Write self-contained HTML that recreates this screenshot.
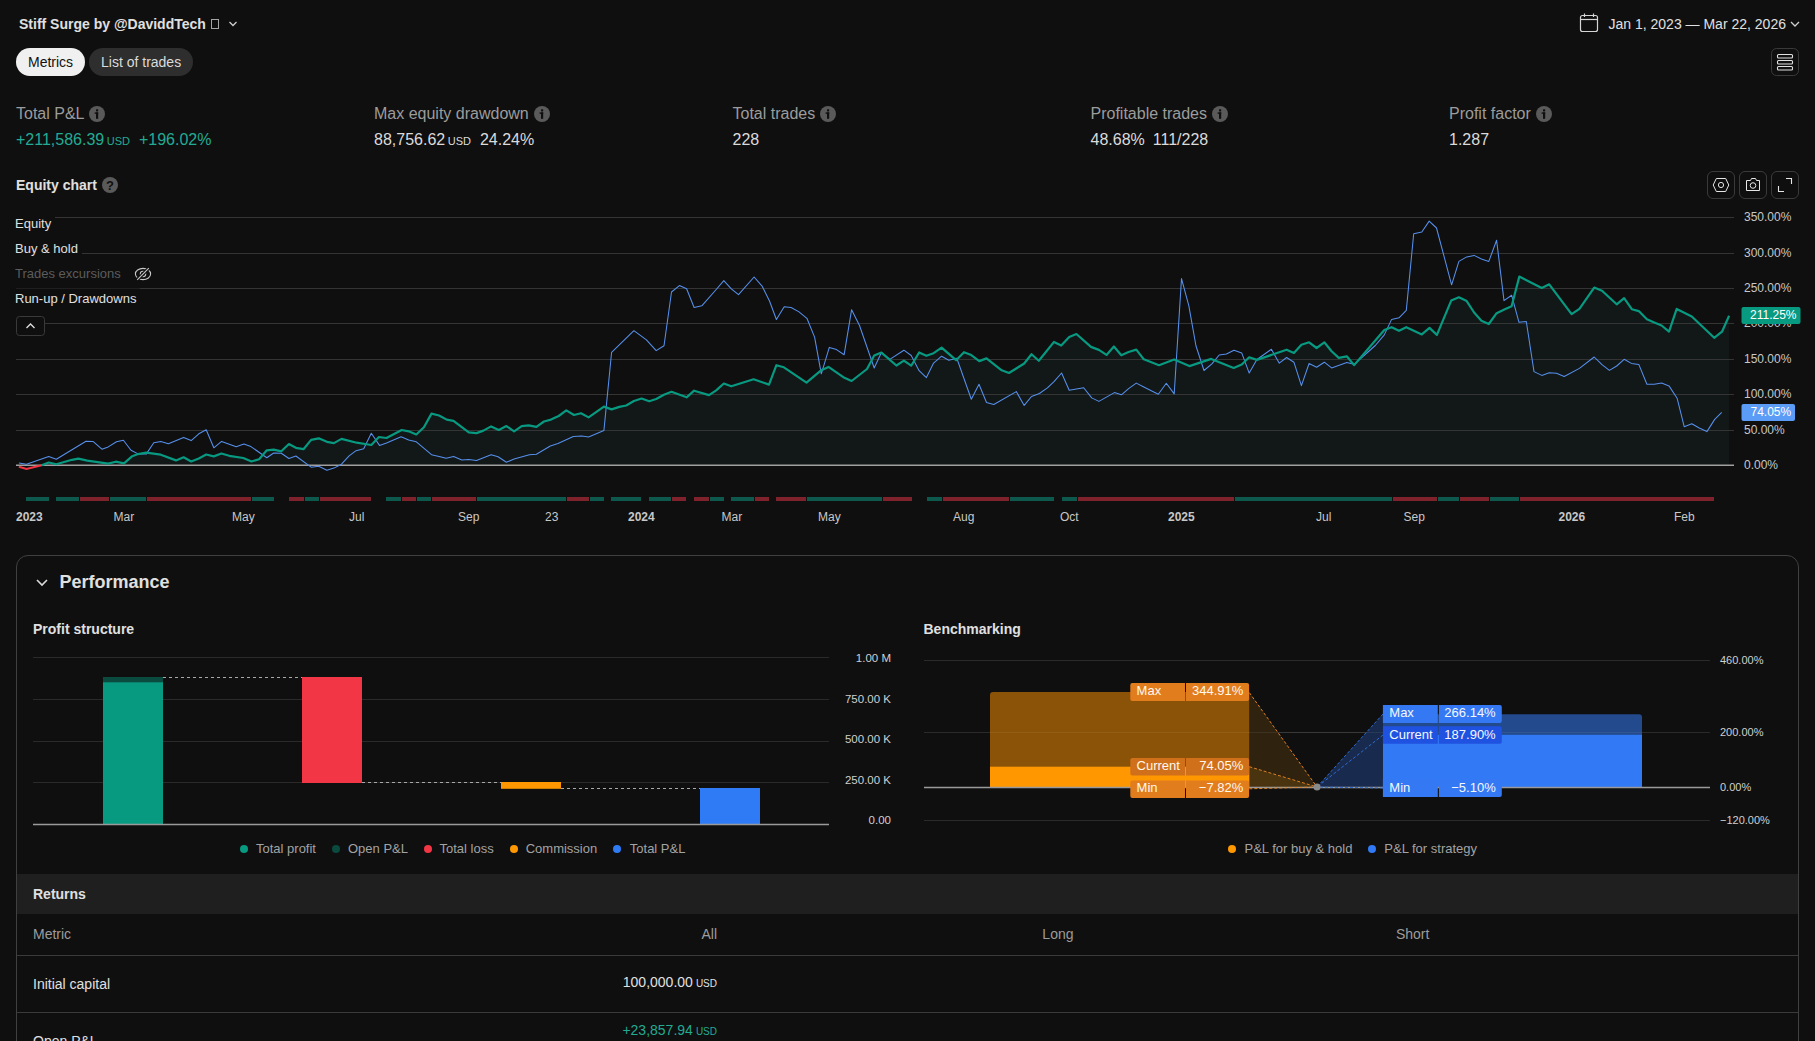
<!DOCTYPE html>
<html><head><meta charset="utf-8">
<style>
html,body{margin:0;padding:0;background:#0f0f0f;width:1815px;height:1041px;overflow:hidden;}
body{font-family:"Liberation Sans",sans-serif;color:#dbdbdb;position:relative;}
.t{position:absolute;line-height:1;white-space:nowrap;}
.b{font-weight:700;}
.lbl{font-size:16px;color:#9c9c9c;}
.val{font-size:16px;color:#dbdbdb;}
.usd{font-size:11px;margin-left:2.5px;}
.info{position:absolute;width:16px;height:16px;border-radius:50%;background:#5a5a5a;}
.ibtn{position:absolute;top:171px;width:26px;height:26px;border:1px solid #3a3a3a;border-radius:6px;}
.leg{font-size:13px;color:#a3a3a3;}
.dot{position:absolute;width:8px;height:8px;border-radius:50%;}
svg{position:absolute;left:0;top:0;}
</style></head><body>

<!-- header -->
<div class="t b" style="left:19px;top:17.2px;font-size:14px;color:#e0e0e0;">Stiff Surge by @DaviddTech</div>
<div style="position:absolute;left:211px;top:19px;width:6px;height:8px;border:1px solid #a6a6a6;"></div>
<svg width="1815" height="100" style="pointer-events:none">
  <path d="M229.5,22 L233,25.5 L236.5,22" fill="none" stroke="#cfcfcf" stroke-width="1.3"/>
  <!-- calendar -->
  <rect x="1580.5" y="15.5" width="17" height="16" rx="2" fill="none" stroke="#d6d6d6" stroke-width="1.2"/>
  <line x1="1580.5" y1="19.5" x2="1597.5" y2="19.5" stroke="#d6d6d6" stroke-width="1.2"/>
  <line x1="1584.5" y1="13.5" x2="1584.5" y2="17" stroke="#d6d6d6" stroke-width="1.2"/>
  <line x1="1593.5" y1="13.5" x2="1593.5" y2="17" stroke="#d6d6d6" stroke-width="1.2"/>
  <path d="M1791,22 L1795,26 L1799,22" fill="none" stroke="#cfcfcf" stroke-width="1.3"/>
  <!-- menu btn -->
  <rect x="1771.5" y="48.5" width="27" height="27" rx="5" fill="none" stroke="#3a3a3a"/>
  <rect x="1777.5" y="54.5" width="15" height="3.5" rx="1" fill="none" stroke="#e0e0e0" stroke-width="1.1"/>
  <rect x="1777.5" y="60.5" width="15" height="3.5" rx="1" fill="none" stroke="#e0e0e0" stroke-width="1.1"/>
  <rect x="1777.5" y="66.5" width="15" height="3.5" rx="1" fill="none" stroke="#e0e0e0" stroke-width="1.1"/>
</svg>
<div class="t" style="left:1608.5px;top:17.3px;font-size:14px;color:#e0e0e0;">Jan 1, 2023 — Mar 22, 2026</div>

<!-- pills -->
<div style="position:absolute;left:16px;top:48px;width:69px;height:28px;border-radius:14px;background:#f0f0f0;"></div>
<div class="t" style="left:28px;top:54.6px;font-size:14px;color:#111;">Metrics</div>
<div style="position:absolute;left:89px;top:48px;width:104px;height:28px;border-radius:14px;background:#2e2e2e;"></div>
<div class="t" style="left:101px;top:54.6px;font-size:14px;color:#dbdbdb;">List of trades</div>

<!-- metrics -->
<div class="t lbl" style="left:16px;top:105.5px;">Total P&amp;L</div><div class="info" style="left:89px;top:106px;"><svg width="16" height="16" style="position:absolute;left:0;top:0"><rect x="7" y="3.2" width="2.2" height="2.2" rx="0.6" fill="#0f0f0f"/><rect x="5.6" y="6.4" width="3.6" height="1.4" fill="#0f0f0f"/><rect x="7" y="6.4" width="2.2" height="6.4" fill="#0f0f0f"/></svg></div>
<div class="t val" style="left:16px;top:131.5px;color:#22ab94;">+211,586.39<span class="usd">USD</span><span style="margin-left:9px">+196.02%</span></div>

<div class="t lbl" style="left:374px;top:105.5px;">Max equity drawdown</div><div class="info" style="left:534px;top:106px;"><svg width="16" height="16" style="position:absolute;left:0;top:0"><rect x="7" y="3.2" width="2.2" height="2.2" rx="0.6" fill="#0f0f0f"/><rect x="5.6" y="6.4" width="3.6" height="1.4" fill="#0f0f0f"/><rect x="7" y="6.4" width="2.2" height="6.4" fill="#0f0f0f"/></svg></div>
<div class="t val" style="left:374px;top:131.5px;">88,756.62<span class="usd">USD</span><span style="margin-left:9px">24.24%</span></div>

<div class="t lbl" style="left:732.5px;top:105.5px;">Total trades</div><div class="info" style="left:820px;top:106px;"><svg width="16" height="16" style="position:absolute;left:0;top:0"><rect x="7" y="3.2" width="2.2" height="2.2" rx="0.6" fill="#0f0f0f"/><rect x="5.6" y="6.4" width="3.6" height="1.4" fill="#0f0f0f"/><rect x="7" y="6.4" width="2.2" height="6.4" fill="#0f0f0f"/></svg></div>
<div class="t val" style="left:732.5px;top:131.5px;">228</div>

<div class="t lbl" style="left:1090.5px;top:105.5px;">Profitable trades</div><div class="info" style="left:1212px;top:106px;"><svg width="16" height="16" style="position:absolute;left:0;top:0"><rect x="7" y="3.2" width="2.2" height="2.2" rx="0.6" fill="#0f0f0f"/><rect x="5.6" y="6.4" width="3.6" height="1.4" fill="#0f0f0f"/><rect x="7" y="6.4" width="2.2" height="6.4" fill="#0f0f0f"/></svg></div>
<div class="t val" style="left:1090.5px;top:131.5px;">48.68%<span style="margin-left:8px">111/228</span></div>

<div class="t lbl" style="left:1449px;top:105.5px;">Profit factor</div><div class="info" style="left:1536px;top:106px;"><svg width="16" height="16" style="position:absolute;left:0;top:0"><rect x="7" y="3.2" width="2.2" height="2.2" rx="0.6" fill="#0f0f0f"/><rect x="5.6" y="6.4" width="3.6" height="1.4" fill="#0f0f0f"/><rect x="7" y="6.4" width="2.2" height="6.4" fill="#0f0f0f"/></svg></div>
<div class="t val" style="left:1449px;top:131.5px;">1.287</div>

<!-- equity chart heading -->
<div class="t b" style="left:16px;top:178.2px;font-size:14px;color:#e0e0e0;">Equity chart</div>
<div style="position:absolute;left:102px;top:177px;width:16px;height:16px;border-radius:50%;background:#5a5a5a;color:#0f0f0f;font-size:13px;font-weight:700;line-height:17px;text-align:center;">?</div>

<div class="ibtn" style="left:1707px;"></div>
<div class="ibtn" style="left:1739px;"></div>
<div class="ibtn" style="left:1771px;"></div>

<!-- main chart svg -->
<svg width="1815" height="1041">
  <path d="M41.7,465 L41.7,465.3 L48.7,462.5 L56.3,464.3 L72,459.8 L78.4,458.7 L87.3,460.6 L108.2,463.6 L115.8,461.7 L124,463.4 L131.7,456.6 L138,454.1 L146.2,452.6 L160.8,454.7 L176,460.4 L183.6,457.3 L191.2,461.5 L198.8,458.5 L206.2,454.5 L213.8,456.4 L221.4,453.5 L229.2,455.8 L243.3,458 L251.5,461.5 L259.1,459.2 L266.8,450.3 L273.7,449.7 L281.3,451.3 L288.9,444 L295.9,447.8 L303.5,449.2 L311.1,439.9 L318.7,438.3 L326.9,441.8 L333.9,443.1 L341.5,438.9 L356.7,442.7 L371.3,445 L378.9,437 L386.5,438 L401.7,430 L408.7,431.3 L416.3,434.5 L423.9,427.2 L431.5,413.6 L439.1,415.5 L446.7,419.6 L453.5,420.8 L468.8,432.4 L476.5,433.1 L483.4,430.6 L491.1,426.4 L498.8,429.9 L506.4,426.1 L514.1,431.3 L521.7,426.1 L528.7,425.4 L536.4,426.8 L544,421.5 L551,419.6 L558.7,416 L566.3,410.4 L574,415 L581,413.2 L588.6,417.4 L603.9,406.6 L611.6,409.4 L619.3,406.9 L626.2,405.5 L633.9,401 L641.6,398.5 L649.2,401.3 L656.2,399 L663.9,394.8 L671.5,391.8 L686.6,397.3 L694.1,390.7 L709,395.1 L716.2,390.4 L723.8,383.5 L731.3,386.3 L753.6,379.3 L769,384.6 L776.4,365.2 L783.9,367.3 L806.5,382.7 L821.3,370.2 L828.5,366.9 L844.4,377.8 L851.6,381 L867,369 L874.2,355.5 L881.4,352.6 L896.4,365.5 L903.9,360.6 L911.2,365.7 L919.1,352.5 L926.4,355.8 L933.6,353.2 L941.6,347.6 L956.1,360.2 L964,352.2 L971.3,355.1 L979.3,361.1 L986.5,358.4 L1001.7,370.3 L1009,373 L1024.2,363.5 L1031.5,354.2 L1038.8,360.8 L1054,341.9 L1061.2,345.6 L1069.2,337 L1076.4,334 L1091,346.9 L1098.9,349.9 L1106.5,354.9 L1113.9,346.5 L1121.3,355.3 L1128.6,352 L1136.3,349.6 L1143.8,359.3 L1159,365.2 L1174.2,359.5 L1189.4,366.1 L1211.2,358.9 L1233.7,367.9 L1241.7,364.5 L1249.2,357.3 L1256.9,359.9 L1286.6,349.7 L1293.9,352.9 L1301.4,344.7 L1309.1,342.3 L1316.6,348 L1324.3,342.3 L1331.6,351.3 L1338.8,357.9 L1346.8,356.3 L1354.1,365.1 L1384.3,330 L1391.6,327.2 L1399,330.8 L1406.3,327.2 L1421.8,334.4 L1429.5,327.9 L1436.9,334.9 L1451.2,300.6 L1458.9,297.3 L1466.7,301.1 L1474.1,312.5 L1481.4,320.7 L1488.8,324 L1496.6,313.2 L1504.3,309.6 L1511.6,306.3 L1519.3,276.6 L1541.8,288 L1549.2,284.3 L1571.6,314.2 L1579.4,308.8 L1594.2,287.6 L1602,290.7 L1616.7,304.3 L1624.1,298.1 L1631.8,309.2 L1638.8,311.1 L1646.9,319.3 L1654.3,322.6 L1661.6,325.5 L1669,331.6 L1676.7,308.9 L1691.8,316.5 L1714.2,337.8 L1722,331.7 L1729.1,315.7 L1729.1,465 Z" fill="#121717"/>
  <line x1="16" x2="1734" y1="430.5" y2="430.5" stroke="#343434" stroke-width="1"/><line x1="16" x2="1734" y1="394.5" y2="394.5" stroke="#343434" stroke-width="1"/><line x1="16" x2="1734" y1="359.5" y2="359.5" stroke="#343434" stroke-width="1"/><line x1="16" x2="1734" y1="323.5" y2="323.5" stroke="#343434" stroke-width="1"/><line x1="16" x2="1734" y1="288.5" y2="288.5" stroke="#343434" stroke-width="1"/><line x1="16" x2="1734" y1="253.5" y2="253.5" stroke="#343434" stroke-width="1"/><line x1="16" x2="1734" y1="217.5" y2="217.5" stroke="#343434" stroke-width="1"/>
  <line x1="16" x2="1734" y1="465.2" y2="465.2" stroke="#a0a0a0" stroke-width="1.6"/>
  <path d="M18.9,466.8 L26.5,469 L41.7,465.3" fill="none" stroke="#f23645" stroke-width="2"/>
  <path d="M18.9,463 L26.5,464.3 L48.7,456.6 L56.3,459.2 L86,441.2 L93,441.4 L101.9,449.2 L108.2,446.9 L116.5,441.8 L123.4,440.2 L131,450.3 L138,453.9 L146.2,454.1 L153.8,442.7 L160.8,441.4 L168.4,443.7 L183.6,437.4 L191.2,440.6 L198.8,433.8 L206.2,429.8 L213.8,447.8 L221.6,441.4 L236.2,446.7 L243.9,444.1 L250.9,446.6 L266.8,457.7 L273.7,453 L281.3,453.2 L288.9,458.5 L295.9,456 L311.1,467.2 L318.7,466.2 L326.9,470.3 L333.9,468.1 L341.5,464.2 L349.1,455.8 L356.1,450.7 L363.7,448.8 L371.3,433.2 L379.5,445.4 L386.5,443.1 L401.1,436.8 L408.7,439.9 L416.3,441.8 L431.5,454.7 L439.1,456.4 L446.1,458.3 L453.6,456.4 L461.8,460 L468.8,459.6 L476.5,460.5 L491.1,454.7 L498.1,456.8 L506.4,462.3 L514.1,459.1 L529.4,454.7 L536.4,454.3 L550.3,446 L558,443.5 L573.3,436.6 L581.7,435.9 L588.6,436.9 L603.9,430.6 L611.6,352.3 L633.9,330.7 L646.4,339.8 L656.2,350.6 L664,345.8 L671.5,292 L679.4,285.6 L686.6,288.8 L694.1,307.5 L701.8,305.8 L716.2,289.5 L723.8,280.6 L731.3,288.8 L738.5,294.6 L754.1,277 L762.3,286.4 L769.5,301 L776.4,319.5 L784.2,306.8 L791.1,307.5 L799,311.9 L806.9,318.3 L814.6,337.1 L821.3,373.8 L829.3,347.4 L836.5,349.6 L844.1,354.8 L851.6,309.7 L859.5,325.5 L874.2,368 L881.4,352.5 L889.8,359.4 L903.9,350.2 L911.2,355.5 L919.1,370.7 L926.4,377.6 L933.6,363.1 L941.6,356.2 L948.8,360.2 L956.8,358.2 L971.3,399.2 L979,384.2 L986.5,402.5 L993.8,404.5 L1016.3,391.6 L1024.2,405.4 L1031.5,396.5 L1039.4,393.5 L1047.4,387.9 L1054,381.6 L1061.6,373 L1069.2,390.2 L1083.7,387.7 L1091.7,397.9 L1098.9,401.4 L1114.4,392.6 L1121.4,394.8 L1128.6,388.6 L1136.3,383.1 L1143.8,387 L1158.3,394.3 L1166.3,383.3 L1174.2,393.9 L1181.5,278.6 L1188.8,305.7 L1196,346 L1204,370.5 L1211.9,363.9 L1219.2,355 L1226.4,354 L1234,350.3 L1241.7,352.9 L1249.2,373.1 L1256.9,359.5 L1271.4,349.3 L1279.3,363.2 L1286.6,357.5 L1293.9,362.2 L1301.4,385.7 L1309.1,363.5 L1316.6,367.2 L1324.3,362.2 L1331.6,367.9 L1346.8,362.6 L1354.1,364.3 L1368,352 L1375.3,345.5 L1384.3,334.9 L1391.6,319.4 L1399,317.8 L1406.3,310.4 L1413.7,233.7 L1421.8,232 L1429.2,221.1 L1436.5,228 L1451.6,284.8 L1458.9,261.4 L1466.7,256.9 L1474.1,255.4 L1481.4,259 L1488.8,261.4 L1496.6,240.2 L1504,300.6 L1511.6,295.2 L1519,322.3 L1526.3,321.5 L1534,371.6 L1541.8,375.4 L1549.2,372.8 L1556.5,373.3 L1564.2,376.5 L1579.4,368.4 L1594.2,357 L1602,364.7 L1609.4,370.4 L1616.7,366 L1624.1,359.3 L1631.4,363.4 L1638.8,364.4 L1646.9,384.3 L1654.3,384.3 L1661.6,383 L1669,385.9 L1677.1,398.2 L1684.2,426.7 L1691.8,423.8 L1699.2,428 L1706.9,431.6 L1714.7,419.4 L1721.7,412.4" fill="none" stroke="#5690ec" stroke-width="1.05" stroke-linejoin="round"/>
  <path d="M41.7,465.3 L48.7,462.5 L56.3,464.3 L72,459.8 L78.4,458.7 L87.3,460.6 L108.2,463.6 L115.8,461.7 L124,463.4 L131.7,456.6 L138,454.1 L146.2,452.6 L160.8,454.7 L176,460.4 L183.6,457.3 L191.2,461.5 L198.8,458.5 L206.2,454.5 L213.8,456.4 L221.4,453.5 L229.2,455.8 L243.3,458 L251.5,461.5 L259.1,459.2 L266.8,450.3 L273.7,449.7 L281.3,451.3 L288.9,444 L295.9,447.8 L303.5,449.2 L311.1,439.9 L318.7,438.3 L326.9,441.8 L333.9,443.1 L341.5,438.9 L356.7,442.7 L371.3,445 L378.9,437 L386.5,438 L401.7,430 L408.7,431.3 L416.3,434.5 L423.9,427.2 L431.5,413.6 L439.1,415.5 L446.7,419.6 L453.5,420.8 L468.8,432.4 L476.5,433.1 L483.4,430.6 L491.1,426.4 L498.8,429.9 L506.4,426.1 L514.1,431.3 L521.7,426.1 L528.7,425.4 L536.4,426.8 L544,421.5 L551,419.6 L558.7,416 L566.3,410.4 L574,415 L581,413.2 L588.6,417.4 L603.9,406.6 L611.6,409.4 L619.3,406.9 L626.2,405.5 L633.9,401 L641.6,398.5 L649.2,401.3 L656.2,399 L663.9,394.8 L671.5,391.8 L686.6,397.3 L694.1,390.7 L709,395.1 L716.2,390.4 L723.8,383.5 L731.3,386.3 L753.6,379.3 L769,384.6 L776.4,365.2 L783.9,367.3 L806.5,382.7 L821.3,370.2 L828.5,366.9 L844.4,377.8 L851.6,381 L867,369 L874.2,355.5 L881.4,352.6 L896.4,365.5 L903.9,360.6 L911.2,365.7 L919.1,352.5 L926.4,355.8 L933.6,353.2 L941.6,347.6 L956.1,360.2 L964,352.2 L971.3,355.1 L979.3,361.1 L986.5,358.4 L1001.7,370.3 L1009,373 L1024.2,363.5 L1031.5,354.2 L1038.8,360.8 L1054,341.9 L1061.2,345.6 L1069.2,337 L1076.4,334 L1091,346.9 L1098.9,349.9 L1106.5,354.9 L1113.9,346.5 L1121.3,355.3 L1128.6,352 L1136.3,349.6 L1143.8,359.3 L1159,365.2 L1174.2,359.5 L1189.4,366.1 L1211.2,358.9 L1233.7,367.9 L1241.7,364.5 L1249.2,357.3 L1256.9,359.9 L1286.6,349.7 L1293.9,352.9 L1301.4,344.7 L1309.1,342.3 L1316.6,348 L1324.3,342.3 L1331.6,351.3 L1338.8,357.9 L1346.8,356.3 L1354.1,365.1 L1384.3,330 L1391.6,327.2 L1399,330.8 L1406.3,327.2 L1421.8,334.4 L1429.5,327.9 L1436.9,334.9 L1451.2,300.6 L1458.9,297.3 L1466.7,301.1 L1474.1,312.5 L1481.4,320.7 L1488.8,324 L1496.6,313.2 L1504.3,309.6 L1511.6,306.3 L1519.3,276.6 L1541.8,288 L1549.2,284.3 L1571.6,314.2 L1579.4,308.8 L1594.2,287.6 L1602,290.7 L1616.7,304.3 L1624.1,298.1 L1631.8,309.2 L1638.8,311.1 L1646.9,319.3 L1654.3,322.6 L1661.6,325.5 L1669,331.6 L1676.7,308.9 L1691.8,316.5 L1714.2,337.8 L1722,331.7 L1729.1,315.7" fill="none" stroke="#089981" stroke-width="2.2" stroke-linejoin="round"/>
  <rect x="26" y="497" width="23" height="4" fill="#0e594d"/><rect x="56" y="497" width="23" height="4" fill="#0e594d"/><rect x="80" y="497" width="29" height="4" fill="#80222c"/><rect x="110" y="497" width="36" height="4" fill="#0e594d"/><rect x="147" y="497" width="104" height="4" fill="#80222c"/><rect x="252" y="497" width="22" height="4" fill="#0e594d"/><rect x="289" y="497" width="15" height="4" fill="#80222c"/><rect x="305" y="497" width="14" height="4" fill="#0e594d"/><rect x="320" y="497" width="51" height="4" fill="#80222c"/><rect x="386" y="497" width="15" height="4" fill="#0e594d"/><rect x="402" y="497" width="14" height="4" fill="#80222c"/><rect x="417" y="497" width="14" height="4" fill="#0e594d"/><rect x="432" y="497" width="44" height="4" fill="#80222c"/><rect x="477" y="497" width="89" height="4" fill="#0e594d"/><rect x="567" y="497" width="22" height="4" fill="#80222c"/><rect x="590" y="497" width="14" height="4" fill="#0e594d"/><rect x="611" y="497" width="30" height="4" fill="#0e594d"/><rect x="649" y="497" width="22" height="4" fill="#0e594d"/><rect x="672" y="497" width="14" height="4" fill="#80222c"/><rect x="694" y="497" width="15" height="4" fill="#80222c"/><rect x="710" y="497" width="14" height="4" fill="#0e594d"/><rect x="731" y="497" width="23" height="4" fill="#0e594d"/><rect x="755" y="497" width="14" height="4" fill="#80222c"/><rect x="776" y="497" width="30" height="4" fill="#80222c"/><rect x="807" y="497" width="75" height="4" fill="#0e594d"/><rect x="883" y="497" width="29" height="4" fill="#80222c"/><rect x="927" y="497" width="15" height="4" fill="#0e594d"/><rect x="943" y="497" width="66" height="4" fill="#80222c"/><rect x="1010" y="497" width="44" height="4" fill="#0e594d"/><rect x="1062" y="497" width="15" height="4" fill="#0e594d"/><rect x="1078" y="497" width="156" height="4" fill="#80222c"/><rect x="1235" y="497" width="157" height="4" fill="#0e594d"/><rect x="1393" y="497" width="44" height="4" fill="#80222c"/><rect x="1438" y="497" width="21" height="4" fill="#0e594d"/><rect x="1460" y="497" width="29" height="4" fill="#80222c"/><rect x="1490" y="497" width="29" height="4" fill="#0e594d"/><rect x="1520" y="497" width="194" height="4" fill="#80222c"/>
  <g font-family="Liberation Sans" font-size="12" fill="#c8c8c8"><text x="1744" y="469.1">0.00%</text><text x="1744" y="434.3">50.00%</text><text x="1744" y="398.3">100.00%</text><text x="1744" y="363.3">150.00%</text><text x="1744" y="327.3">200.00%</text><text x="1744" y="292.3">250.00%</text><text x="1744" y="257.3">300.00%</text><text x="1744" y="221.3">350.00%</text></g>
  <g font-family="Liberation Sans" font-size="12" fill="#c8c8c8"><text x="16" y="521" font-weight="700">2023</text><text x="113.5" y="521" >Mar</text><text x="232" y="521" >May</text><text x="349" y="521" >Jul</text><text x="458" y="521" >Sep</text><text x="545" y="521" >23</text><text x="628" y="521" font-weight="700">2024</text><text x="721.5" y="521" >Mar</text><text x="818" y="521" >May</text><text x="953" y="521" >Aug</text><text x="1060" y="521" >Oct</text><text x="1168" y="521" font-weight="700">2025</text><text x="1316" y="521" >Jul</text><text x="1403.6" y="521" >Sep</text><text x="1558.5" y="521" font-weight="700">2026</text><text x="1674" y="521" >Feb</text></g>
  <rect x="1741.5" y="307" width="59" height="17" rx="2" fill="#089981"/>
  <text x="1750" y="318.9" font-family="Liberation Sans" font-size="12" fill="#ffffff">211.25%</text>
  <rect x="1741.5" y="404" width="53.5" height="17" rx="2" fill="#5b9cf6"/>
  <text x="1750.5" y="415.9" font-family="Liberation Sans" font-size="12" fill="#ffffff">74.05%</text>
  <!-- icons -->
  <path d="M1716.3,178.5 L1725.7,178.5 L1728.8,185 L1725.7,191.5 L1716.3,191.5 L1713.2,185 Z" fill="none" stroke="#e6e6e6" stroke-width="1"/>
  <circle cx="1721" cy="185" r="2.6" fill="none" stroke="#e6e6e6" stroke-width="1"/>
  <path d="M1746.5,180.5 L1750.5,180.5 L1751.5,178.5 L1755.5,178.5 L1756.5,180.5 L1759.5,180.5 L1759.5,190.5 L1746.5,190.5 Z" fill="none" stroke="#e6e6e6" stroke-width="1"/>
  <circle cx="1753" cy="185.5" r="2.8" fill="none" stroke="#e6e6e6" stroke-width="1"/>
  <path d="M1786,178.5 L1791.5,178.5 L1791.5,184" fill="none" stroke="#e6e6e6" stroke-width="1.1"/>
  <path d="M1778.5,186 L1778.5,191.5 L1784,191.5" fill="none" stroke="#e6e6e6" stroke-width="1.1"/>
</svg>

<!-- chart legend -->
<div style="position:absolute;left:10px;top:215px;width:45px;height:19px;background:#0f0f0f;"></div>
<div style="position:absolute;left:10px;top:240px;width:72px;height:19px;background:#0f0f0f;"></div>
<div style="position:absolute;left:10px;top:265px;width:146px;height:19px;background:#0f0f0f;"></div>
<div style="position:absolute;left:10px;top:287.8px;width:130px;height:22px;background:rgba(15,15,15,0.55);"></div>
<div class="t" style="left:15px;top:217px;font-size:13px;color:#e0e0e0;">Equity</div>
<div class="t" style="left:15px;top:242px;font-size:13px;color:#e0e0e0;">Buy &amp; hold</div>
<div class="t" style="left:15px;top:267px;font-size:13px;color:#5c5c5c;">Trades excursions</div>
<div class="t" style="left:15px;top:292px;font-size:13px;color:#e0e0e0;">Run-up / Drawdowns</div>
<svg width="1815" height="400">
  <ellipse cx="143" cy="274" rx="7.6" ry="5.6" fill="none" stroke="#c8c8c8" stroke-width="1.1"/>
  <circle cx="143" cy="274" r="2.7" fill="none" stroke="#c8c8c8" stroke-width="1.1"/>
  <line x1="137" y1="280" x2="149" y2="268" stroke="#0f0f0f" stroke-width="3.2"/>
  <line x1="137.2" y1="279.8" x2="148.8" y2="268.2" stroke="#c8c8c8" stroke-width="1.1"/>
  <rect x="16.5" y="316.5" width="28" height="19" rx="3" fill="#0f0f0f" stroke="#3a3a3a"/>
  <path d="M26.5,328 L30.5,324 L34.5,328" fill="none" stroke="#e0e0e0" stroke-width="1.3"/>
</svg>

<!-- performance panel -->
<div style="position:absolute;left:16px;top:555px;width:1781px;height:600px;border:1px solid #404040;border-radius:12px;"></div>
<svg width="1815" height="1041">
  <path d="M37,580 L42,585 L47,580" fill="none" stroke="#dbdbdb" stroke-width="1.6"/>
</svg>
<div class="t b" style="left:59.5px;top:572.8px;font-size:18px;color:#e0e0e0;">Performance</div>
<div class="t b" style="left:33px;top:621.9px;font-size:14px;color:#e0e0e0;">Profit structure</div>
<div class="t b" style="left:923.5px;top:622px;font-size:14px;color:#e0e0e0;">Benchmarking</div>

<svg width="1815" height="1041">
  <g stroke="#2a2a2a" stroke-width="1">
    <line x1="33" x2="829" y1="657.5" y2="657.5"/>
    <line x1="33" x2="829" y1="699.5" y2="699.5"/>
    <line x1="33" x2="829" y1="741.5" y2="741.5"/>
    <line x1="33" x2="829" y1="782.5" y2="782.5"/>
    <line x1="924" x2="1710" y1="660.5" y2="660.5"/>
    <line x1="924" x2="1710" y1="732.5" y2="732.5"/>
    <line x1="924" x2="1710" y1="820.5" y2="820.5"/>
  </g>
  <g font-family="Liberation Sans" font-size="11.5" fill="#d0d0d0" text-anchor="end">
    <text x="891" y="662.3">1.00 M</text>
    <text x="891" y="703.2">750.00 K</text>
    <text x="891" y="743.4">500.00 K</text>
    <text x="891" y="784.3">250.00 K</text>
    <text x="891" y="824">0.00</text>
  </g>
  <rect x="103" y="677" width="60" height="5.2" fill="#0a4a3f"/>
  <rect x="103" y="682.2" width="60" height="142.5" fill="#089981"/>
  <rect x="302" y="677" width="60" height="106" fill="#f23645"/>
  <rect x="501" y="782" width="60" height="6.8" fill="#ff9800"/>
  <rect x="700" y="788" width="60" height="36.7" fill="#2f7bf5"/>
  <g stroke="#a8a8a8" stroke-width="1" stroke-dasharray="3,3">
    <line x1="163" x2="302" y1="677.5" y2="677.5"/>
    <line x1="362" x2="501" y1="782.5" y2="782.5"/>
    <line x1="561" x2="700" y1="788.5" y2="788.5"/>
  </g>
  <line x1="33" x2="829" y1="824.5" y2="824.5" stroke="#9a9a9a" stroke-width="1.5"/>

  <!-- benchmarking -->
  <g font-family="Liberation Sans" font-size="11" fill="#d0d0d0">
    <text x="1720" y="663.8">460.00%</text>
    <text x="1720" y="735.8">200.00%</text>
    <text x="1720" y="790.8">0.00%</text>
    <text x="1720" y="823.8">−120.00%</text>
  </g>
  <path d="M1249.3,692.5 L1317,787 L1249.3,788 Z" fill="#2f230f"/>
  <path d="M1249.3,766.7 L1317,787 L1249.3,788 Z" fill="#4a3410"/>
  <path d="M993,692 L1246.3,692 Q1249.3,692 1249.3,695 L1249.3,788 L990,788 L990,695 Q990,692 993,692 Z" fill="#8a5308"/>
  <rect x="990" y="766.7" width="259.3" height="20.7" fill="#ff9800"/>
  <path d="M1383,714 L1317,787 L1383,787 Z" fill="#182a4d"/>
  <path d="M1383,714.2 L1639,714.2 Q1642,714.2 1642,717.2 L1642,787.4 L1383,787.4 Z" fill="#234a8c"/>
  <rect x="1383" y="734.8" width="259" height="52.6" fill="#3179f5"/>
  <line x1="990" x2="1642" y1="732.5" y2="732.5" stroke="rgba(255,255,255,0.07)" stroke-width="1"/>
  <line x1="924" x2="1710" y1="787.5" y2="787.5" stroke="#9a9a9a" stroke-width="1.5"/>
  <g stroke="#e08020" stroke-width="1" stroke-dasharray="3,2" fill="none">
    <line x1="1249.3" y1="692.6" x2="1317" y2="787"/>
    <line x1="1249.3" y1="766.7" x2="1317" y2="787"/>
    <line x1="1249.3" y1="788.8" x2="1317" y2="787"/>
  </g>
  <g stroke="#2f6ad0" stroke-width="1" stroke-dasharray="3,2" fill="none">
    <line x1="1383" y1="714" x2="1317" y2="787"/>
    <line x1="1383" y1="735" x2="1317" y2="787"/>
    <line x1="1383" y1="788" x2="1317" y2="787"/>
  </g>
  <circle cx="1317" cy="787" r="3.5" fill="#8a8a8a"/>
  <!-- orange labels -->
  <g fill="#e27d1d">
    <path d="M1132.3,683.1 H1185 V700.9 H1132.3 Q1130.3,700.9 1130.3,698.9 V685.1 Q1130.3,683.1 1132.3,683.1 Z"/>
    <path d="M1186,683.1 H1247.1 Q1249.1,683.1 1249.1,685.1 V698.9 Q1249.1,700.9 1247.1,700.9 H1186 Z"/>
    <path d="M1132.3,780.4 H1185 V797.9 H1132.3 Q1130.3,797.9 1130.3,795.9 V782.4 Q1130.3,780.4 1132.3,780.4 Z"/>
    <path d="M1186,780.4 H1247.1 Q1249.1,780.4 1249.1,782.4 V795.9 Q1249.1,797.9 1247.1,797.9 H1186 Z"/>
  </g>
  <g fill="#d0701a">
    <path d="M1132.3,758.1 H1185 V775.6 H1132.3 Q1130.3,775.6 1130.3,773.6 V760.1 Q1130.3,758.1 1132.3,758.1 Z"/>
    <path d="M1186,758.1 H1247.1 Q1249.1,758.1 1249.1,760.1 V773.6 Q1249.1,775.6 1247.1,775.6 H1186 Z"/>
  </g>
  <g fill="#3479f3">
    <path d="M1382.9,705 H1437.8 V723 H1382.9 Z"/>
    <path d="M1438.9,705 H1499.8 Q1501.8,705 1501.8,707 V721 Q1501.8,723 1499.8,723 H1438.9 Z"/>
    <path d="M1382.9,779 H1437.8 V797 H1382.9 Z"/>
    <path d="M1438.9,779 H1499.8 Q1501.8,779 1501.8,781 V795 Q1501.8,797 1499.8,797 H1438.9 Z"/>
  </g>
  <g fill="#1f52e0">
    <path d="M1382.9,726.2 H1437.8 V743.8 H1382.9 Z"/>
    <path d="M1438.9,726.2 H1499.8 Q1501.8,726.2 1501.8,728.2 V741.8 Q1501.8,743.8 1499.8,743.8 H1438.9 Z"/>
  </g>
  <g font-family="Liberation Sans" font-size="13" fill="#fff8ef">
    <text x="1136.6" y="694.6">Max</text>
    <text x="1243.3" y="694.6" text-anchor="end">344.91%</text>
    <text x="1136.6" y="769.6">Current</text>
    <text x="1243.3" y="769.6" text-anchor="end">74.05%</text>
    <text x="1136.6" y="792.3">Min</text>
    <text x="1243.3" y="792.3" text-anchor="end">−7.82%</text>
  </g>
  <g font-family="Liberation Sans" font-size="13" fill="#f4f8ff">
    <text x="1389.3" y="716.9">Max</text>
    <text x="1495.7" y="716.9" text-anchor="end">266.14%</text>
    <text x="1389.3" y="738.5">Current</text>
    <text x="1495.7" y="738.5" text-anchor="end">187.90%</text>
    <text x="1389.3" y="791.7">Min</text>
    <text x="1495.7" y="791.7" text-anchor="end">−5.10%</text>
  </g>
  <!-- legends -->
  <circle cx="244" cy="849" r="4" fill="#089981"/>
  <circle cx="336" cy="849" r="4" fill="#0a4a3f"/>
  <circle cx="428" cy="849" r="4" fill="#f23645"/>
  <circle cx="514" cy="849" r="4" fill="#ff9800"/>
  <circle cx="617" cy="849" r="4" fill="#2f7bf5"/>
  <circle cx="1232" cy="849" r="4" fill="#ff9800"/>
  <circle cx="1372" cy="849" r="4" fill="#3179f5"/>
  <g font-family="Liberation Sans" font-size="13" fill="#a3a3a3">
    <text x="256" y="853">Total profit</text>
    <text x="348" y="853">Open P&amp;L</text>
    <text x="439.5" y="853">Total loss</text>
    <text x="525.7" y="853">Commission</text>
    <text x="629.8" y="853">Total P&amp;L</text>
    <text x="1244.5" y="853">P&amp;L for buy &amp; hold</text>
    <text x="1384.3" y="853">P&amp;L for strategy</text>
  </g>
</svg>

<!-- returns table -->
<div style="position:absolute;left:17px;top:874px;width:1781px;height:40px;background:#1f1f1f;"></div>
<div class="t b" style="left:33px;top:887.2px;font-size:14px;color:#e0e0e0;">Returns</div>
<div class="t" style="left:33px;top:927.2px;font-size:14px;color:#9c9c9c;">Metric</div>
<div class="t" style="left:617px;width:100px;text-align:right;top:927.2px;font-size:14px;color:#9c9c9c;">All</div>
<div class="t" style="left:973.5px;width:100px;text-align:right;top:927.2px;font-size:14px;color:#9c9c9c;">Long</div>
<div class="t" style="left:1329.4px;width:100px;text-align:right;top:927.2px;font-size:14px;color:#9c9c9c;">Short</div>
<div style="position:absolute;left:17px;top:955px;width:1781px;height:1px;background:#3a3a3a;"></div>
<div class="t" style="left:33px;top:977.2px;font-size:14px;color:#e0e0e0;">Initial capital</div>
<div class="t" style="left:517px;width:200px;text-align:right;top:975px;font-size:14px;color:#e0e0e0;">100,000.00<span style="font-size:10px;margin-left:3px">USD</span></div>
<div style="position:absolute;left:17px;top:1012px;width:1781px;height:1px;background:#3a3a3a;"></div>
<div class="t" style="left:33px;top:1033.8px;font-size:14px;color:#e0e0e0;">Open P&amp;L</div>
<div class="t" style="left:517px;width:200px;text-align:right;top:1022.5px;font-size:14px;color:#22ab94;">+23,857.94<span style="font-size:10px;margin-left:3px">USD</span></div>

</body></html>
